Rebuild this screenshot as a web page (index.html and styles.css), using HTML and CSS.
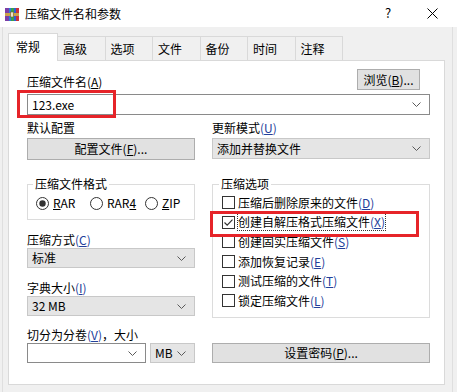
FILE: index.html
```html
<!DOCTYPE html>
<html lang="zh-CN">
<head>
    <meta charset="UTF-8">
    <title>压缩文件名和参数</title>
    <link rel="stylesheet" href="styles.css">
</head>
<body>
<div class="window">

    <!-- 标题栏 -->
    <div class="titlebar">
        <svg class="app-icon" viewBox="0 0 16 16">
            <rect x="1" y="2" width="4" height="13" fill="#7b3fa8"/>
            <rect x="5" y="2" width="2" height="13" fill="#2c7fd6"/>
            <rect x="7" y="2" width="3" height="13" fill="#3aa04a"/>
            <rect x="10" y="2" width="2" height="13" fill="#2c5fd6"/>
            <rect x="12" y="2" width="3" height="13" fill="#c8323a"/>
            <rect x="1" y="7" width="14" height="3" fill="#c9a24a"/>
            <rect x="6.5" y="6" width="3" height="5" fill="#ece4cc" stroke="#7a5a20" stroke-width="0.6"/>
        </svg>
        <span class="title">压缩文件名和参数</span>
        <span class="help">?</span>
        <svg class="close" viewBox="0 0 11 11">
            <path d="M0.5 0.5 L10.5 10.5 M10.5 0.5 L0.5 10.5" stroke="#000" stroke-width="1" fill="none"/>
        </svg>
    </div>

    <div class="body">
        <!-- 选项卡 -->
        <div class="tabs">
            <div class="tab active">常规</div>
            <div class="tab">高级</div>
            <div class="tab">选项</div>
            <div class="tab">文件</div>
            <div class="tab">备份</div>
            <div class="tab">时间</div>
            <div class="tab">注释</div>
        </div>

        <div class="panel">
            <div class="file-row">
                <span class="label">压缩文件名(<u>A</u>)</span>
                <div class="btn browse">浏览(<u>B</u>)...</div>
            </div>
            <div class="combo edit file">
                <span>123.exe</span>
                <svg class="chevron" viewBox="0 0 9 5"><path d="M0.5 0.5 L4.5 4.5 L8.5 0.5"/></svg>
            </div>

            <div class="cols">
                <!-- 左列 -->
                <div class="col">
                    <div class="label">默认配置</div>
                    <div class="btn config">配置文件(<u>F</u>)...</div>

                    <fieldset class="group format">
                        <legend>压缩文件格式</legend>
                        <div class="radios">
                            <div class="radio-item rar">
                                <svg class="radio" viewBox="0 0 13 13"><circle cx="6.5" cy="6.5" r="6" fill="#fff" stroke="#333"/><circle cx="6.5" cy="6.5" r="3.2" fill="#333"/></svg>
                                <span><u>R</u>AR</span>
                            </div>
                            <div class="radio-item rar4">
                                <svg class="radio" viewBox="0 0 13 13"><circle cx="6.5" cy="6.5" r="6" fill="#fff" stroke="#333"/></svg>
                                <span>RAR<u>4</u></span>
                            </div>
                            <div class="radio-item">
                                <svg class="radio" viewBox="0 0 13 13"><circle cx="6.5" cy="6.5" r="6" fill="#fff" stroke="#333"/></svg>
                                <span><u>Z</u>IP</span>
                            </div>
                        </div>
                    </fieldset>

                    <div class="label gap12">压缩方式<span class="key">(<u>C</u>)</span></div>
                    <div class="combo gray">
                        <span>标准</span>
                        <svg class="chevron" viewBox="0 0 9 5"><path d="M0.5 0.5 L4.5 4.5 L8.5 0.5"/></svg>
                    </div>

                    <div class="label gap12">字典大小<span class="key">(<u>I</u>)</span></div>
                    <div class="combo gray">
                        <span>32 MB</span>
                        <svg class="chevron" viewBox="0 0 9 5"><path d="M0.5 0.5 L4.5 4.5 L8.5 0.5"/></svg>
                    </div>

                    <div class="label gap11">切分为分卷<span class="key">(<u>V</u>)</span>，大小</div>
                    <div class="split-row">
                        <div class="combo edit volume">
                            <span></span>
                            <svg class="chevron" viewBox="0 0 9 5"><path d="M0.5 0.5 L4.5 4.5 L8.5 0.5"/></svg>
                        </div>
                        <div class="combo gray unit">
                            <span>MB</span>
                            <svg class="chevron" viewBox="0 0 9 5"><path d="M0.5 0.5 L4.5 4.5 L8.5 0.5"/></svg>
                        </div>
                    </div>
                </div>

                <!-- 右列 -->
                <div class="col">
                    <div class="label">更新模式<span class="key">(<u>U</u>)</span></div>
                    <div class="combo gray update">
                        <span>添加并替换文件</span>
                        <svg class="chevron" viewBox="0 0 9 5"><path d="M0.5 0.5 L4.5 4.5 L8.5 0.5"/></svg>
                    </div>

                    <fieldset class="group options">
                        <legend>压缩选项</legend>
                        <div class="check-row">
                            <svg class="check" viewBox="0 0 13 13"><rect x="0.5" y="0.5" width="12" height="12" fill="#fff" stroke="#333"/></svg>
                            <span>压缩后删除原来的文件<span class="key">(<u>D</u>)</span></span>
                        </div>
                        <div class="check-row">
                            <svg class="check" viewBox="0 0 13 13"><rect x="0.5" y="0.5" width="12" height="12" fill="#fff" stroke="#333"/><path d="M2.5 6.5 L5.2 9.2 L10.5 3.6" stroke="#333" stroke-width="1.2" fill="none"/></svg>
                            <span class="focus">创建自解压格式压缩文件<span class="key">(<u>X</u>)</span></span>
                        </div>
                        <div class="check-row">
                            <svg class="check" viewBox="0 0 13 13"><rect x="0.5" y="0.5" width="12" height="12" fill="#fff" stroke="#333"/></svg>
                            <span>创建固实压缩文件<span class="key">(<u>S</u>)</span></span>
                        </div>
                        <div class="check-row">
                            <svg class="check" viewBox="0 0 13 13"><rect x="0.5" y="0.5" width="12" height="12" fill="#fff" stroke="#333"/></svg>
                            <span>添加恢复记录<span class="key">(<u>E</u>)</span></span>
                        </div>
                        <div class="check-row">
                            <svg class="check" viewBox="0 0 13 13"><rect x="0.5" y="0.5" width="12" height="12" fill="#fff" stroke="#333"/></svg>
                            <span>测试压缩的文件<span class="key">(<u>T</u>)</span></span>
                        </div>
                        <div class="check-row">
                            <svg class="check" viewBox="0 0 13 13"><rect x="0.5" y="0.5" width="12" height="12" fill="#fff" stroke="#333"/></svg>
                            <span>锁定压缩文件<span class="key">(<u>L</u>)</span></span>
                        </div>
                    </fieldset>

                    <div class="btn password">设置密码(<u>P</u>)...</div>
                </div>
            </div>
        </div>
    </div>

    <!-- 红色标注框 -->
    <div class="mark mark-file"></div>
    <div class="mark mark-sfx"></div>
</div>
</body>
</html>
```

FILE: styles.css
```css
* {
    box-sizing: border-box;
}

body {
    margin: 0;
    background-color: #f0f0f0;
    font-family: "Noto Sans CJK SC", "Liberation Sans", sans-serif;
    font-size: 12px;
    line-height: 16px;
    color: #000;
}

u {
    text-decoration: underline;
    text-underline-offset: 1px;
}

.window {
    position: relative;
    width: 457px;
    height: 392px;
    overflow: hidden;
}

/* 标题栏 */
.titlebar {
    height: 27px;
    background-color: #fff;
    display: flex;
    align-items: center;
    padding-left: 4px;
}

.app-icon {
    width: 16px;
    height: 16px;
    margin-right: 5px;
}

.title {
    flex: 1;
    font-size: 12px;
}

.help {
    width: 10px;
    text-align: center;
    font-size: 13px;
    margin-right: 34px;
    margin-top: -2px;
}

.close {
    width: 11px;
    height: 11px;
    margin-right: 19px;
}

/* 主体 */
.body {
    height: 365px;
    margin: 0 4px 0 2px;
    border-left: 1px solid #dfdfdf;
    border-right: 1px solid #dfdfdf;
    padding: 6px 7px 0 5px;
}

.tabs {
    display: flex;
    align-items: flex-end;
    height: 27px;
}

.tab {
    width: 47.5px;
    height: 24px;
    border-top: 1px solid #d9d9d9;
    border-right: 1px solid #d9d9d9;
    padding: 4px 0 0 5px;
    background-color: #f0f0f0;
}

.tab.active {
    position: relative;
    z-index: 1;
    width: 50px;
    height: 28px;
    margin-bottom: -1px;
    border-left: 1px solid #d9d9d9;
    background-color: #fff;
    padding: 5px 0 0 7px;
}

.panel {
    height: 325px;
    background-color: #fff;
    border: 1px solid #d9d9d9;
    padding: 8px 14px 0 18px;
}

.label {
    display: block;
    white-space: nowrap;
}

.key {
    color: #23409a;
}

.gap12 {
    margin-top: 12px;
}

.gap11 {
    margin-top: 11px;
}

.file-row {
    display: flex;
    justify-content: space-between;
    align-items: flex-end;
    height: 21px;
}

/* 按钮 */
.btn {
    display: flex;
    align-items: center;
    justify-content: center;
    background-color: #e1e1e1;
    border: 1px solid #adadad;
    white-space: nowrap;
}

.browse {
    width: 63px;
    height: 21px;
    margin-right: 10px;
}

.config {
    margin-top: 2px;
    height: 22px;
}

.password {
    margin-top: 25px;
    height: 20px;
}

/* 下拉框 */
.combo {
    display: flex;
    align-items: center;
    justify-content: space-between;
    height: 20px;
    padding: 0 8px 0 4px;
    white-space: nowrap;
}

.combo.edit {
    background-color: #fff;
    border: 1px solid #8a8a8a;
}

.combo.gray {
    background-color: #e5e5e5;
    border: 1px solid #c8c8c8;
}

.combo.file {
    margin-top: 4px;
    height: 21px;
}

.combo.update {
    margin-top: 2px;
    height: 21px;
}

.chevron {
    width: 9px;
    height: 5px;
    fill: none;
    stroke: #5a5a5a;
    stroke-width: 1;
}

.cols {
    display: grid;
    grid-template-columns: 168px 218px;
    column-gap: 17px;
    margin-top: 5px;
}

.col {
    display: flex;
    flex-direction: column;
}

/* 分组框 */
.group {
    margin: 0;
    min-width: 0;
    border: 1px solid #dcdcdc;
}

.group legend {
    padding: 0 2px;
    line-height: 16px;
}

.format {
    margin-top: 16px;
    padding: 3px 8px 8px 5px;
}

.options {
    margin-top: 17px;
    padding: 1px 6px 6px 6px;
}

.radios {
    display: flex;
    padding-left: 3px;
    height: 16px;
    align-items: center;
}

.radio-item {
    display: flex;
    align-items: center;
}

.radio-item.rar {
    width: 54px;
}

.radio-item.rar4 {
    width: 55px;
}

.radio {
    width: 13px;
    height: 13px;
    margin-right: 4px;
}

.check-row {
    display: flex;
    align-items: center;
    height: 19.6px;
    padding-left: 3px;
    white-space: nowrap;
}

.check {
    width: 13px;
    height: 13px;
    margin-right: 3px;
}

.focus {
    outline: 1px dotted #333;
    outline-offset: 0;
}

.split-row {
    display: flex;
    gap: 4px;
}

.volume {
    width: 119px;
}

.unit {
    width: 45px;
}

/* 标注框 */
.mark {
    position: absolute;
    border: 3px solid #e62429;
}

.mark-file {
    left: 17px;
    top: 90px;
    width: 99px;
    height: 28px;
}

.mark-sfx {
    left: 210px;
    top: 211px;
    width: 209px;
    height: 26px;
}
```
